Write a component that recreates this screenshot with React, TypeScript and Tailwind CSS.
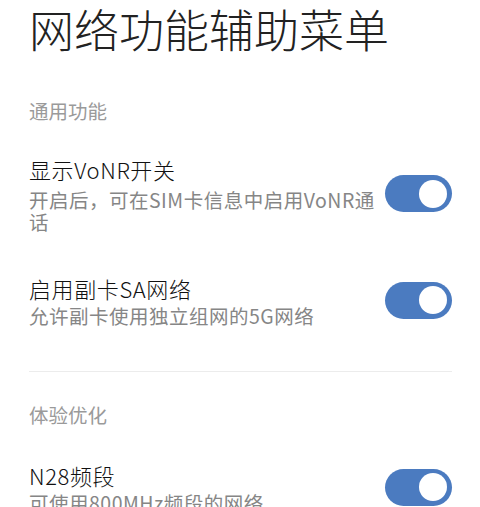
import React from "react";

function Toggle() {
  return (
    <div className="flex h-[37px] w-[67px] shrink-0 items-center justify-end rounded-full bg-[#4b7bc0] pr-[5px]">
      <div className="h-[28px] w-[28px] rounded-full bg-white" />
    </div>
  );
}

function Item({
  title,
  desc,
  gap,
}: {
  title: string;
  desc: string;
  gap: string;
}) {
  return (
    <div className="flex items-center justify-between">
      <div className="w-[350px]">
        <div className="text-[22px] font-light leading-[30px] tracking-[0.6px] text-[#111111]">{title}</div>
        <div className={`${gap} text-[19.5px] leading-[22px] tracking-[0.5px] text-[#868686]`}>{desc}</div>
      </div>
      <Toggle />
    </div>
  );
}

export default function App() {
  return (
    <div
      className="h-[507px] w-[480px] overflow-hidden bg-white pl-[29px] pr-[28px]"
      style={{ fontFamily: '"Noto Sans CJK SC", "Noto Sans", sans-serif' }}
    >
      <div className="text-[45px] font-light leading-[58px] text-[#222222]">网络功能辅助菜单</div>

      <div className="mt-[41px] text-[19.5px] leading-[24px] text-[#9a9a9a]">通用功能</div>

      <div className="mt-[31px]">
        <Item title="显示VoNR开关" desc="开启后，可在SIM卡信息中启用VoNR通话" gap="mt-[5px]" />
      </div>
      <div className="mt-[40px]">
        <Item title="启用副卡SA网络" desc="允许副卡使用独立组网的5G网络" gap="mt-[2px]" />
      </div>

      <div className="mt-[44px] h-px bg-[#ececec]" />

      <div className="mt-[31px] text-[19.5px] leading-[24px] text-[#9a9a9a]">体验优化</div>

      <div className="mt-[33px]">
        <Item title="N28频段" desc="可使用800MHz频段的网络" gap="mt-[2px]" />
      </div>
    </div>
  );
}
